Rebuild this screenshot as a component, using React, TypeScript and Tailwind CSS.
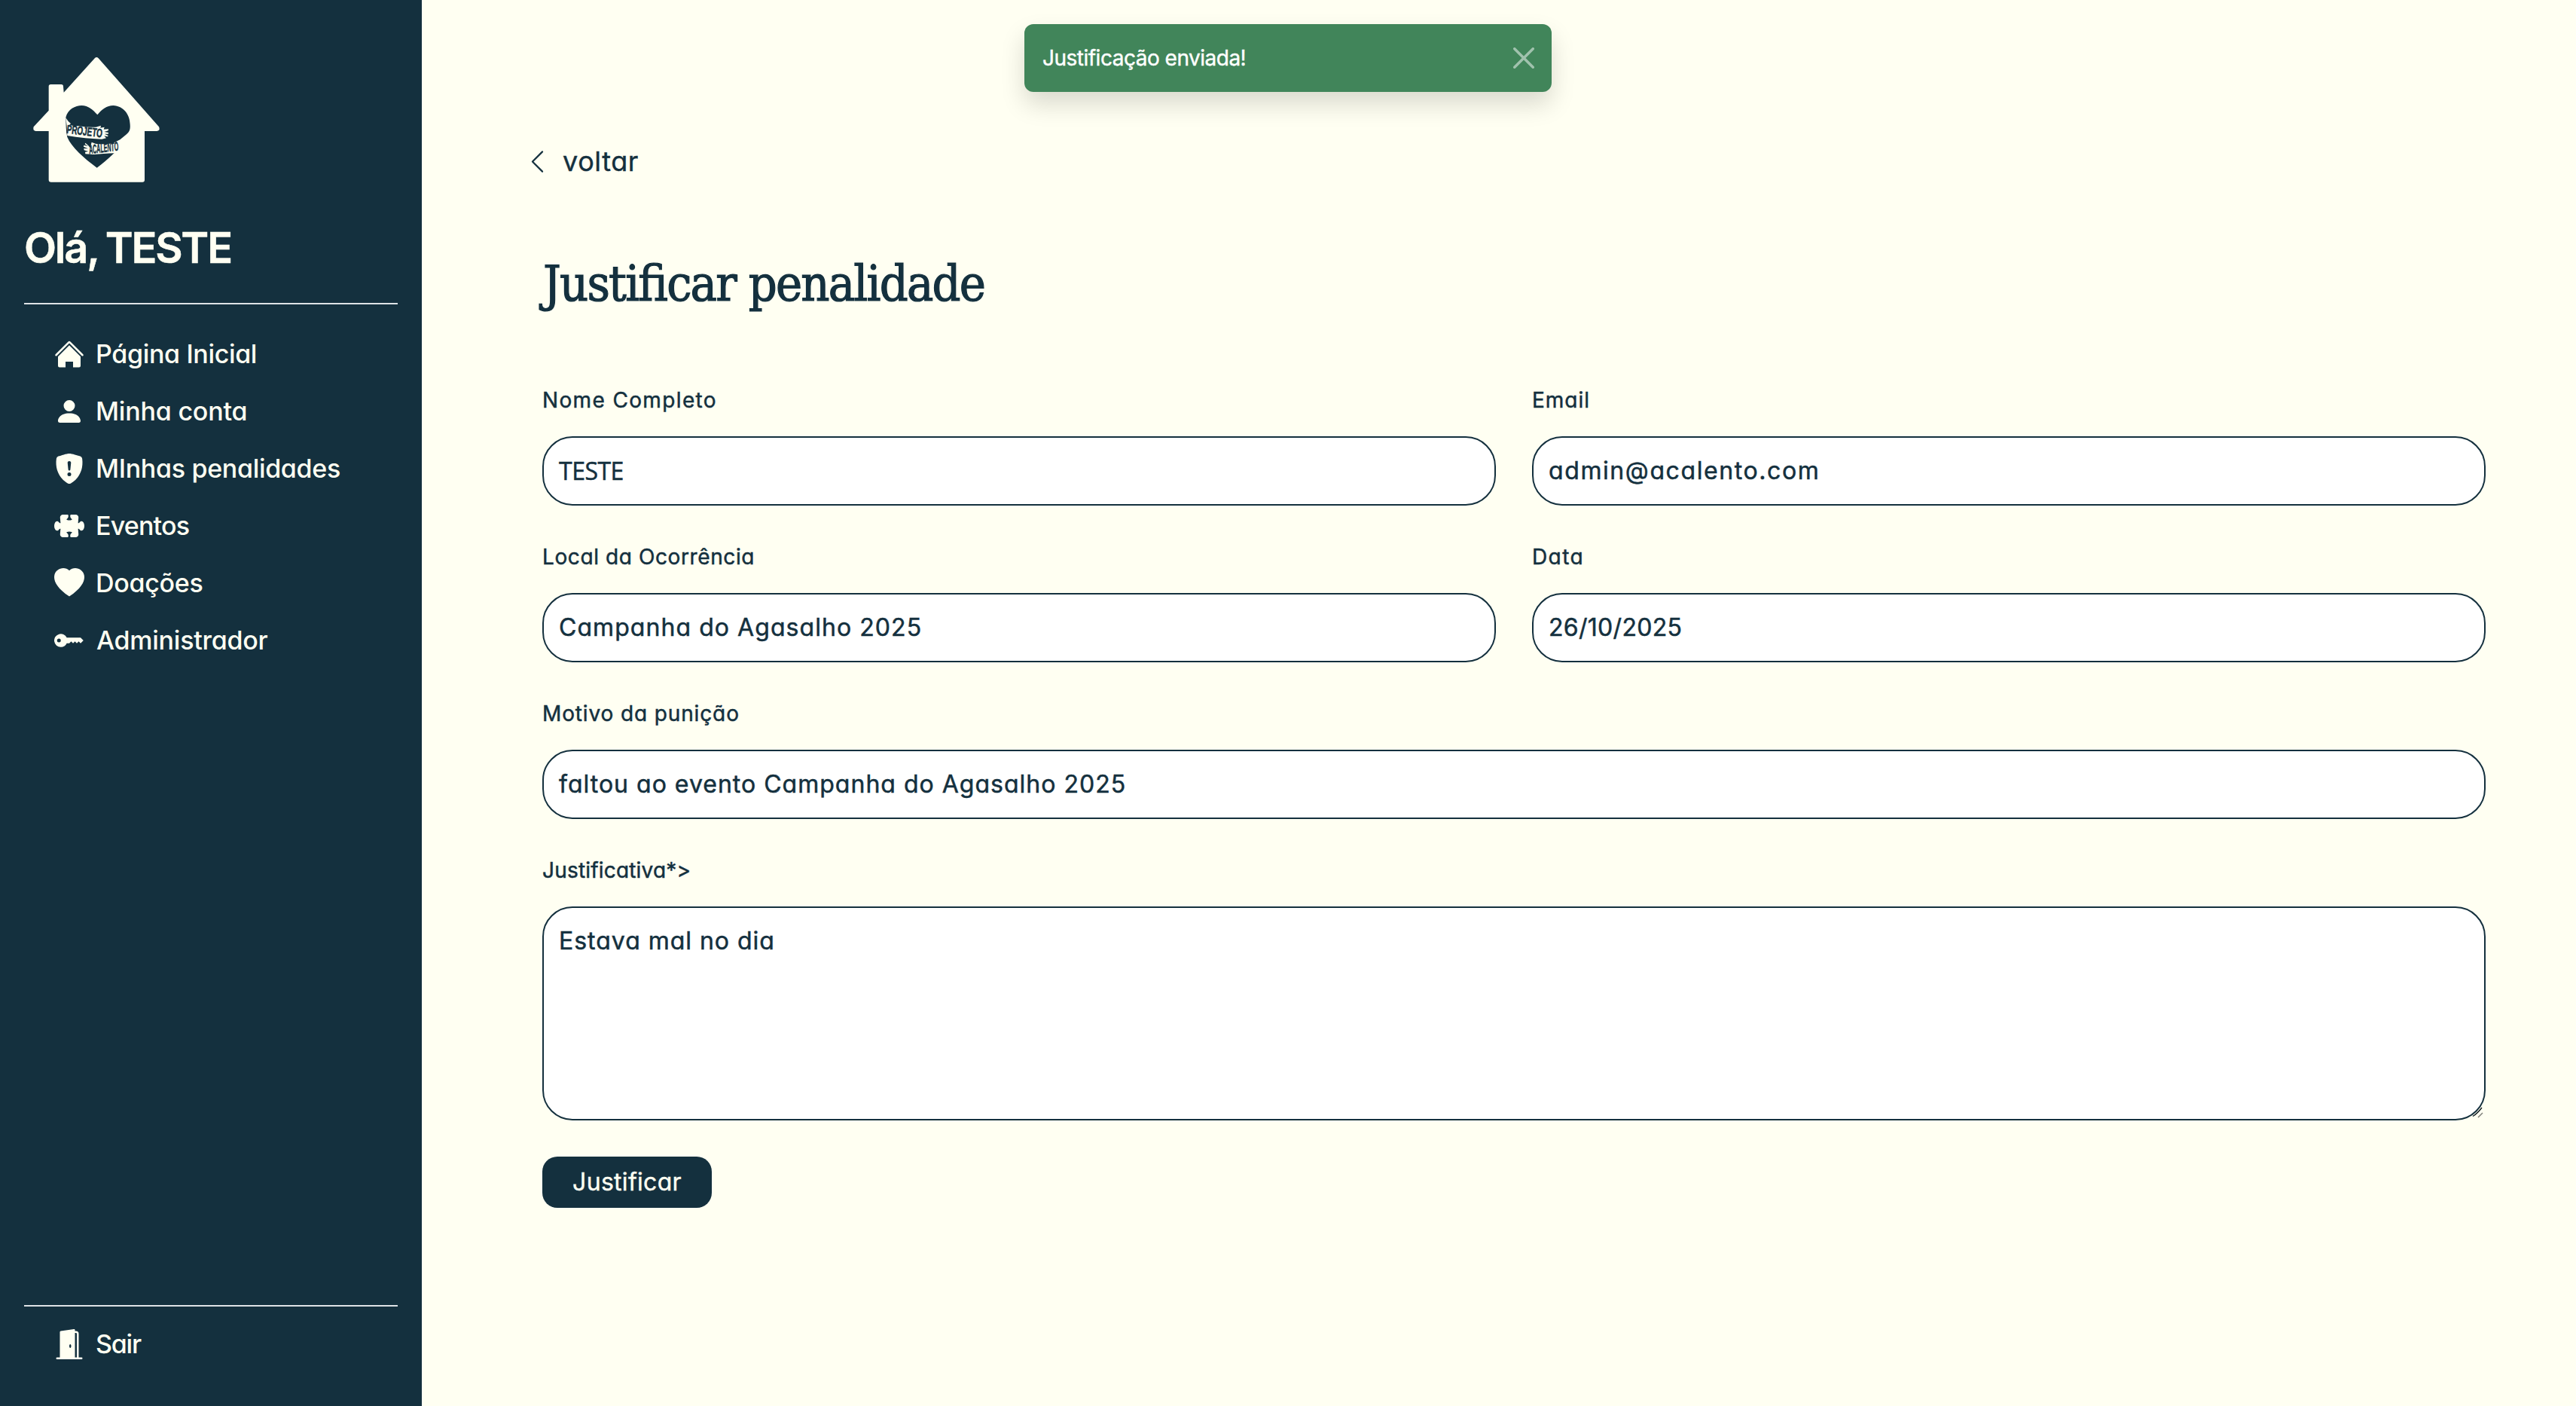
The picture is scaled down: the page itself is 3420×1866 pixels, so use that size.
import type { ReactNode } from 'react';
import { BsChevronLeft, BsDoorOpenFill, BsHeartFill, BsKeyFill, BsPersonFill, BsPuzzleFill, BsShieldFillExclamation } from 'react-icons/bs';

function Logo() {
  return (
    <svg viewBox="6 0 594 600" className="h-[200px] w-[198px] text-[#fffff2]" fill="currentColor">
      <path d="M288 51q7-6 14 1L543 325q7 15-8 17H486V536q0 9-9 9H114q-10 0-10-9V342H52q-13-2-8-17L104 260V164q0-8 8-8H154q8 0 8 8L164 188Z" />
      <path fill="#14303e" d="M172 287C180 255 210 240 235 240C262 240 280 257 298 277C316 255 335 240 361 240C402 242 427 275 428 315C430 338 424 347 412 356L390 374L388 402Q378 420 362 432C340 453 320 470 296 488C245 450 195 407 178 366C172 340 173 315 172 287Z" />
      <path d="M172 289Q182 306 192 312L186 318Q205 322 225 322Q262 328 292 326L312 320L310 329L326 326L323 335L342 334L341 340L325 345L342 348L341 353L326 353L341 360L339 364L325 361L333 370L315 374Q280 372 250 370Q210 366 178 360L176 322Z" />
      <path d="M250 389L262 400L269 409L275 386L290 392Q318 396 346 392Q368 388 391 374L393 404L376 428L368 430Q320 432 284 435L250 433L249 425L262 423L245 418L244 411L261 412L243 404L244 398L260 402L248 394Z" />
      <g fill="#14303e" stroke="#14303e" strokeWidth="1.5" fontFamily="Liberation Sans, sans-serif" fontWeight="700">
        <text x="174" y="350" fontSize="48" textLength="143" lengthAdjust="spacingAndGlyphs" transform="rotate(7 174 350)">PROJETO</text>
        <text x="266" y="433" fontSize="50" fontStyle="italic" textLength="118" lengthAdjust="spacingAndGlyphs" transform="rotate(-7 266 433)">ACALENTO</text>
      </g>
    </svg>
  );
}

function HouseIcon() {
  return (
    <svg viewBox="0 0 16 16" fill="currentColor" className="size-10">
      <path d="M7.293 1.5a1 1 0 0 1 1.414 0l6.647 6.646a.5.5 0 0 1-.708.708L8 2.207 1.354 8.854a.5.5 0 1 1-.708-.708z" />
      <path d="M8 3.293l6 6V14.2a.8.8 0 0 1-.8.8H10v-3H6v3H2.8a.8.8 0 0 1-.8-.8V9.293z" />
    </svg>
  );
}

function NavItem({ icon, children }: { icon: ReactNode; children: ReactNode }) {
  return (
    <a className="flex h-[76px] items-center gap-[15px] pl-10 text-[34px] font-medium whitespace-nowrap">
      {icon}
      <span className="-mt-0.5">{children}</span>
    </a>
  );
}

function Field({ label, children, className = '' }: { label: ReactNode; children: ReactNode; className?: string }) {
  return (
    <label className={`flex flex-col gap-[27px] ${className}`}>
      <span className="text-[28px] leading-[42px] whitespace-nowrap">{label}</span>
      {children}
    </label>
  );
}

function Box({ children }: { children: ReactNode }) {
  return (
    <div className="flex h-[92px] items-center rounded-[40px] border-2 border-[#14303e] bg-white pl-5 text-[32px] whitespace-nowrap">
      {children}
    </div>
  );
}

export default function App() {
  return (
    <div className="flex h-[1866px] w-[3420px] overflow-hidden bg-[#fffff2] font-[Inter,sans-serif] text-[#14303e] [font-feature-settings:'cv11']">
      <aside className="flex w-[560px] shrink-0 flex-col bg-[#14303e] px-8 pt-[60px] text-[#fffff2]">
        <Logo />
        <h1 className="mt-[35px] text-[56px] leading-[68px] font-semibold tracking-[-2.2px] whitespace-nowrap [-webkit-text-stroke:0.5px_#fffff2] [font-feature-settings:normal] [word-spacing:-2px]">
          Olá, TESTE
        </h1>
        <hr className="mt-[39px] border-t-2 border-[#dee2e6]" />
        <nav className="mt-7 flex flex-1 flex-col">
          <NavItem icon={<HouseIcon />}><span className="tracking-[-0.34px]">Página Inicial</span></NavItem>
          <NavItem icon={<BsPersonFill className="size-10" />}><span className="tracking-[-0.2px]">Minha conta</span></NavItem>
          <NavItem icon={<BsShieldFillExclamation className="size-10" />}><span className="tracking-[-0.31px]">MInhas penalidades</span></NavItem>
          <NavItem icon={<BsPuzzleFill className="size-10" />}><span className="tracking-[-0.82px]">Eventos</span></NavItem>
          <NavItem icon={<BsHeartFill className="size-10" />}><span className="tracking-[-0.29px]">Doações</span></NavItem>
          <NavItem icon={<BsKeyFill className="size-10" />}><span className="pl-px tracking-[-0.25px]">Administrador</span></NavItem>
        </nav>
        <hr className="border-t-2 border-[#dee2e6]" />
        <div className="mt-3 mb-[44px]">
          <NavItem icon={<BsDoorOpenFill className="size-10" />}><span className="tracking-[-1.2px]">Sair</span></NavItem>
        </div>
      </aside>

      <main className="flex flex-1 flex-col pt-[188px] pr-[120px] pl-[160px]">
        <a className="-ml-6 flex h-[52px] items-center gap-4 text-[36px] tracking-[0.6px] [-webkit-text-stroke:0.4px_#14303e]">
          <BsChevronLeft className="size-[35px]" />
          voltar
        </a>
        <h2 className="mt-[97px] ml-px font-['DejaVu_Serif_Condensed','DejaVu_Serif',serif] text-[66px] leading-[80px] tracking-[-1.8px] whitespace-nowrap [-webkit-text-stroke:1.2px_#14303e] [font-feature-settings:'liga']">
          Justificar penalidade
        </h2>
        <form className="mt-[93px] grid grid-cols-2 gap-x-12 gap-y-[47px] [-webkit-text-stroke:0.5px_#14303e]">
          <Field label={<span className="tracking-[1.36px]">Nome Completo</span>}>
            <Box><span className="font-['Open_Sans',sans-serif] tracking-[-0.5px]">TESTE</span></Box>
          </Field>
          <Field label={<span className="tracking-[1px]">Email</span>}>
            <Box><span className="tracking-[1.6px]">admin@acalento.com</span></Box>
          </Field>
          <Field label={<span className="tracking-[0.6px]">Local da Ocorrência</span>}>
            <Box><span className="tracking-[1.06px]">Campanha do Agasalho 2025</span></Box>
          </Field>
          <Field label={<span className="tracking-[1.4px]">Data</span>}>
            <Box><span className="tracking-[0.3px]">26/10/2025</span></Box>
          </Field>
          <Field className="col-span-2" label={<span className="tracking-[0.87px]">Motivo da punição</span>}>
            <Box><span className="tracking-[1.01px]">faltou ao evento Campanha do Agasalho 2025</span></Box>
          </Field>
          <Field className="col-span-2" label={<span className="tracking-[0.19px]">Justificativa*&gt;</span>}>
            <div className="relative flex">
              <textarea
                readOnly
                value="Estava mal no dia"
                className="h-[284px] w-full resize-none overflow-hidden rounded-[40px] border-2 border-[#14303e] bg-white px-5 py-5 text-[32px] leading-[48px] tracking-[0.98px] outline-none"
              />
              <svg viewBox="0 0 20 20" className="absolute right-0 bottom-0 size-5" fill="none">
                <path d="M3 14.5Q9 11 15 3" stroke="#0b161c" strokeWidth="1.3" />
                <path d="M10 16L16 10" stroke="#7d7d77" strokeWidth="1.4" />
              </svg>
            </div>
          </Field>
        </form>
        <button type="button" className="mt-12 h-[68px] w-[225px] rounded-[20px] bg-[#14303e] text-[32px] tracking-[0.3px] text-[#fffff2] [-webkit-text-stroke:0.4px_#fffff2]">
          Justificar
        </button>
      </main>

      <div className="absolute top-8 left-[1360px] flex h-[90px] w-[700px] items-center justify-between rounded-xl bg-[#41855a] pr-[23px] pl-6 text-[28px] tracking-[-0.5px] text-white shadow-[0_16px_32px_rgba(0,0,0,0.15)] [font-feature-settings:normal] [-webkit-text-stroke:0.4px_#fff]">
        Justificação enviada!
        <svg viewBox="0 0 16 16" className="size-7 opacity-50" fill="#fff">
          <path d="M.293.293a1 1 0 0 1 1.414 0L8 6.586 14.293.293a1 1 0 1 1 1.414 1.414L9.414 8l6.293 6.293a1 1 0 0 1-1.414 1.414L8 9.414l-6.293 6.293a1 1 0 0 1-1.414-1.414L6.586 8 .293 1.707a1 1 0 0 1 0-1.414" />
        </svg>
      </div>
    </div>
  );
}
